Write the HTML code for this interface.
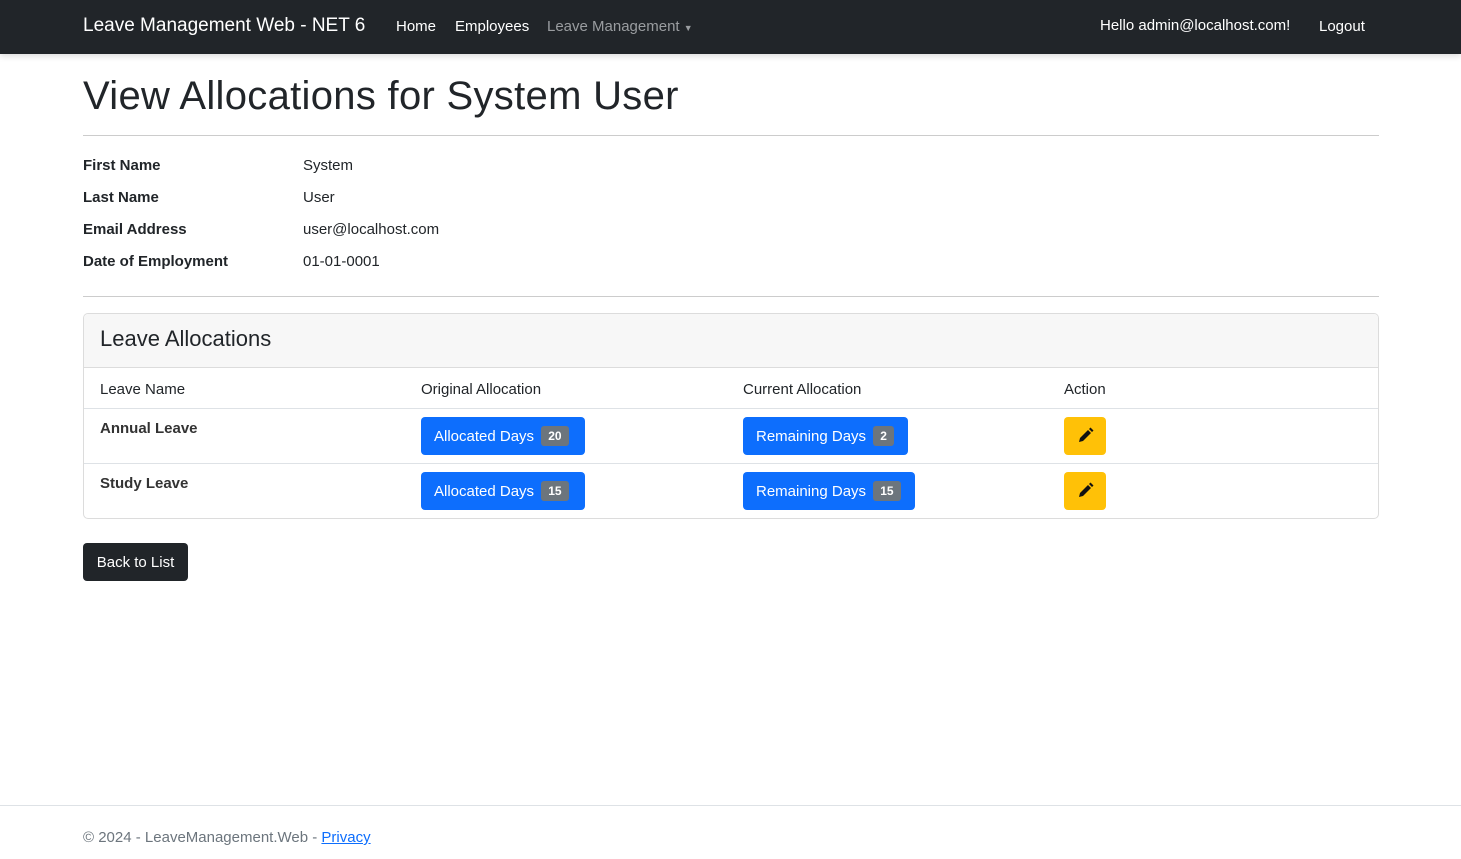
<!DOCTYPE html>
<html><head><style>
*{box-sizing:border-box;margin:0;padding:0}
body{width:1461px;height:859px;position:relative;font-family:"Liberation Sans",sans-serif;font-size:15px;color:#212529;background:#fff;overflow:hidden}
.nav{height:54px;background:#212529;box-shadow:0 2px 6px rgba(0,0,0,.15);position:relative;color:#fff}
.nav span{position:absolute;top:18px;font-size:15px;white-space:nowrap}
.abs{position:absolute;white-space:nowrap}
h1{position:absolute;left:83px;top:74px;font-size:40px;font-weight:500;letter-spacing:0.3px}
.hr{position:absolute;left:83px;width:1296px;height:1px;background:#ccc}
.lbl{font-weight:bold}
.card{position:absolute;left:83px;top:313px;width:1296px;height:206px;border:1px solid #dcdcdc;border-radius:5px;overflow:hidden}
.ch{height:54px;background:#f7f7f7;border-bottom:1px solid #dcdcdc;font-size:22px;font-weight:500;padding:12px 16px}
.row{position:absolute;left:0;width:100%;border-top:1px solid #dee2e6}
.btn{position:absolute;height:38px;background:#0d6efd;color:#fff;border-radius:4px;font-size:15px;padding:0 13px;line-height:39px;white-space:nowrap}
.badge{display:inline-block;background:#6c757d;color:#fff;font-size:12px;font-weight:bold;padding:0 7px;line-height:20px;border-radius:3px;vertical-align:1px;margin-left:3px}
.ed{position:absolute;left:980px;width:42px;height:38px;background:#ffc107;border-radius:4px}
</style></head><body>
<div class="nav">
<span style="left:83px;top:15px;font-size:19px">Leave Management Web - NET 6</span>
<span style="left:396px">Home</span>
<span style="left:455px">Employees</span>
<span style="left:547px;color:#9a9da0">Leave Management <span style="position:static;font-size:9px">▼</span></span>
<span style="left:1100px;top:17px">Hello admin@localhost.com!</span>
<span style="left:1319px">Logout</span>
</div>
<h1>View Allocations for System User</h1>
<div class="hr" style="top:135px"></div>
<div class="abs lbl" style="left:83px;top:157px">First Name</div><div class="abs" style="left:303px;top:157px">System</div>
<div class="abs lbl" style="left:83px;top:189px">Last Name</div><div class="abs" style="left:303px;top:189px">User</div>
<div class="abs lbl" style="left:83px;top:221px">Email Address</div><div class="abs" style="left:303px;top:221px">user@localhost.com</div>
<div class="abs lbl" style="left:83px;top:253px">Date of Employment</div><div class="abs" style="left:303px;top:253px">01-01-0001</div>
<div class="hr" style="top:296px"></div>
<div class="card">
<div class="ch">Leave Allocations</div>
<div class="abs" style="left:16px;top:67px">Leave Name</div>
<div class="abs" style="left:337px;top:67px">Original Allocation</div>
<div class="abs" style="left:659px;top:67px">Current Allocation</div>
<div class="abs" style="left:980px;top:67px">Action</div>
<div class="row" style="top:94px"></div>
<div class="abs" style="left:16px;top:106px;font-weight:bold;color:#333">Annual Leave</div>
<div class="btn" style="left:337px;top:103px;width:164px">Allocated Days <span class="badge">20</span></div>
<div class="btn" style="left:659px;top:103px;width:165px">Remaining Days <span class="badge">2</span></div>
<div class="ed" style="top:103px"><svg width="42" height="38" viewBox="0 0 42 38"><path d="M15 25l1-4 8-8 3 3-8 8z M25 12l1.5-1.5 3 3L28 15z" fill="#111"/></svg></div>
<div class="row" style="top:149px"></div>
<div class="abs" style="left:16px;top:161px;font-weight:bold;color:#333">Study Leave</div>
<div class="btn" style="left:337px;top:158px;width:164px">Allocated Days <span class="badge">15</span></div>
<div class="btn" style="left:659px;top:158px;width:172px">Remaining Days <span class="badge">15</span></div>
<div class="ed" style="top:158px"><svg width="42" height="38" viewBox="0 0 42 38"><path d="M15 25l1-4 8-8 3 3-8 8z M25 12l1.5-1.5 3 3L28 15z" fill="#111"/></svg></div>
</div>
<div class="abs" style="left:83px;top:543px;width:105px;height:38px;background:#212529;color:#fff;border-radius:4px;line-height:39px;text-align:center">Back to List</div>
<div style="position:absolute;left:0;top:805px;width:100%;height:1px;background:#dee2e6"></div>
<div class="abs" style="left:83px;top:829px;color:#6c757d">© 2024 - LeaveManagement.Web - <span style="color:#0d6efd;text-decoration:underline">Privacy</span></div>
</body></html>
